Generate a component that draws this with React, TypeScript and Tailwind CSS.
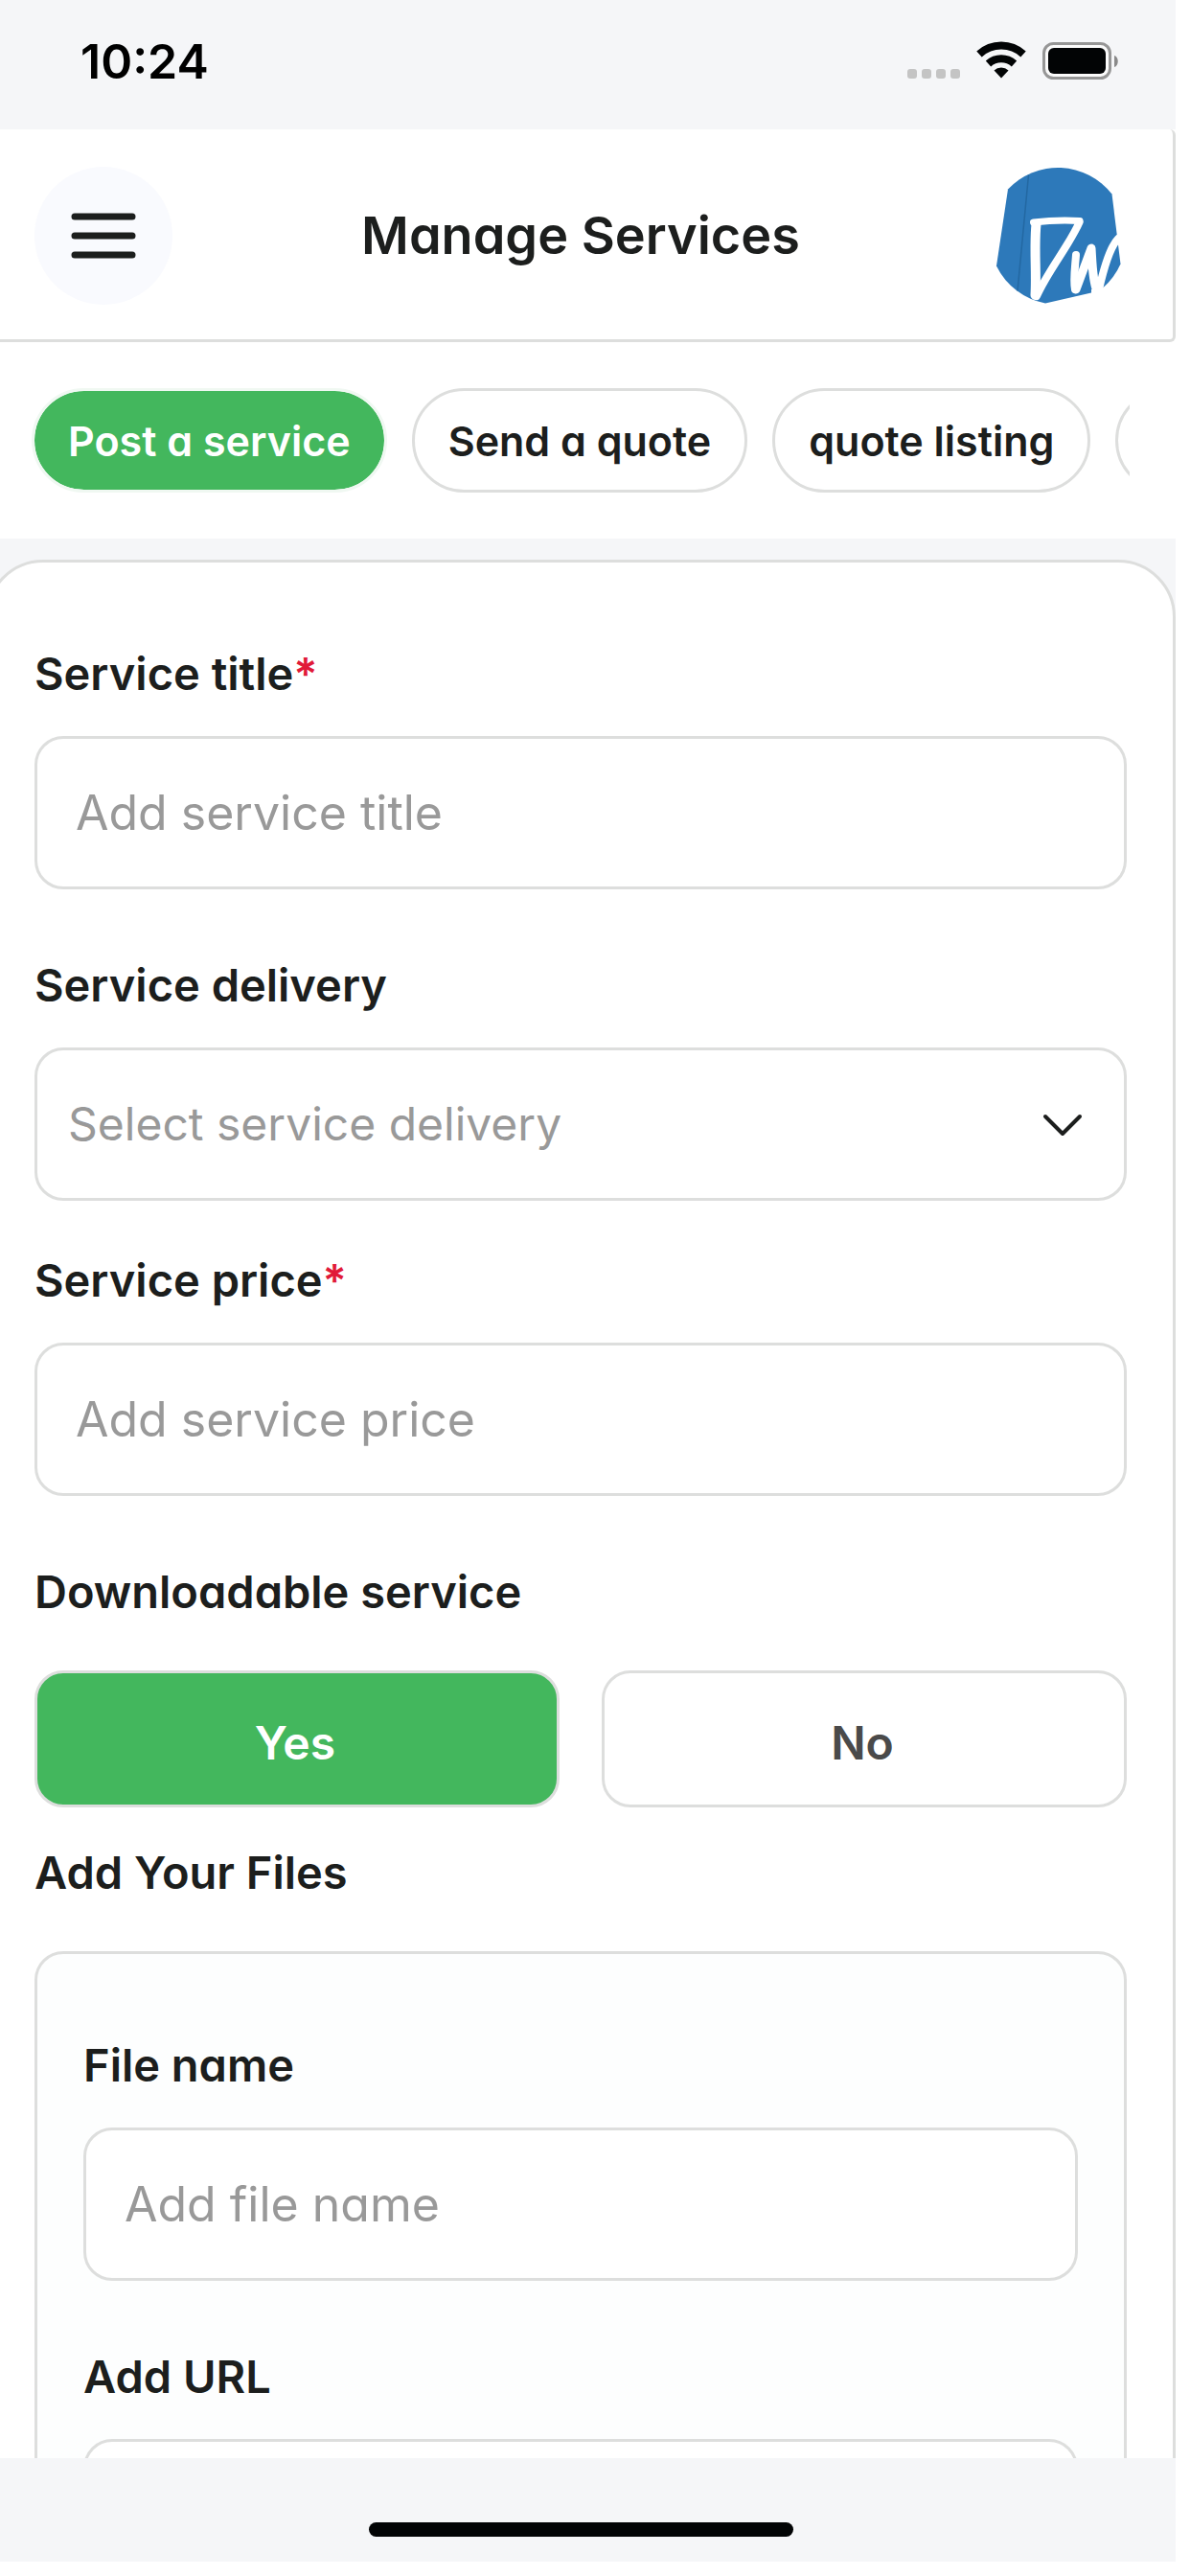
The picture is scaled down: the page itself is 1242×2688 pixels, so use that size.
import { useId, useState } from 'react';
import type { ReactNode } from 'react';

function StatusBar() {
  return (
    <div className="flex h-[135px] shrink-0 items-start justify-between bg-[#f5f6f8] pr-[58px] pl-[84px]">
      <time className="pt-[34px] text-[50px] leading-[60px] font-semibold text-black">10:24</time>
      <svg className="mt-[42px]" width="223" height="42" viewBox="0 0 223 42" aria-hidden="true">
        <g fill="#c4c4c4">
          <rect x="1" y="30" width="10" height="10" rx="3" />
          <rect x="16" y="30" width="10" height="10" rx="3" />
          <rect x="31" y="30" width="10" height="10" rx="3" />
          <rect x="46" y="30" width="10" height="10" rx="3" />
        </g>
        <g fill="none" stroke="#020405" strokeWidth="8">
          <path d="M76 14.500a34 34 0 0 1 46 0" />
          <path d="M85.500 24.500a20 20 0 0 1 27 0" />
        </g>
        <path d="M91.500 31.500a11 11 0 0 1 15 0L99 39.500z" fill="#020405" />
        <rect x="143.500" y="3.500" width="69" height="36" rx="10" fill="#fbfbfb" stroke="#969696" strokeWidth="3" />
        <rect x="148" y="8" width="60" height="27" rx="6" fill="#020405" />
        <path d="M217 16c5 1 5 11 0 12z" fill="#8a8a8a" />
      </svg>
    </div>
  );
}

function Avatar() {
  return (
    <svg className="size-36" viewBox="0 0 144 144" role="img" aria-label="Profile">
      <path
        d="M20 23.500A71.500 71.500 0 0 1 128.500 28.500L137.500 101.500A71.500 71.500 0 0 1 119.500 126L107 131.500L59 142.500A71.500 71.500 0 0 1 8 103.500z"
        fill="#2d79ba"
      />
      <path d="M41.500 8.500L30 129.500" stroke="#2368a2" strokeWidth="1.500" />
      <path d="M107 128h14v7h-14z" fill="#fff" />
      <g fill="none" stroke="#fff" strokeLinecap="round" strokeLinejoin="round">
        <path d="M46.500 58Q72 55 95 56.500" strokeWidth="7" />
        <path d="M49.500 60C47 84 50 110 48.500 134" strokeWidth="10" />
        <path d="M94.500 58C84 82 62 108 50 135" strokeWidth="8" />
        <path d="M91 92C90 106 88 118 90 128" strokeWidth="8" />
        <path d="M91 128L107 85C108 100 108 118 113 130" strokeWidth="9" />
        <path d="M115 128C120 106 126 84 135 75" strokeWidth="8" />
      </g>
    </svg>
  );
}

function Header() {
  return (
    <header className="-ml-[15px] flex shrink-0 items-center justify-between rounded-md border-x-3 border-b-3 border-[#dddedd] bg-white px-12 pt-[39px] pb-9">
      <button type="button" aria-label="Open menu" className="flex size-36 items-center justify-center rounded-full bg-[#f9fafe]">
        <svg width="68" height="48" viewBox="0 0 68 48" fill="none" stroke="#1c1e1d" strokeWidth="7" strokeLinecap="round">
          <path d="M4 4h60M4 24h60M4 44h60" />
        </svg>
      </button>
      <h1 className="text-[54px] leading-[72px] font-semibold">Manage Services</h1>
      <Avatar />
    </header>
  );
}

const tabs = ['Post a service', 'Send a quote', 'quote listing'];

function Tabs() {
  const [active, setActive] = useState(tabs[0]);
  return (
    <nav className="mr-12 ml-[33px] flex shrink-0 gap-[26px] overflow-hidden py-12">
      {tabs.map((tab) => (
        <button
          key={tab}
          type="button"
          aria-pressed={tab === active}
          onClick={() => setActive(tab)}
          className={
            'h-[109px] shrink-0 rounded-full border-3 px-[35px] text-[43px] leading-[56px] font-semibold whitespace-nowrap ' +
            (tab === active ? 'border-[#f0f8f2] bg-[#43b75d] bg-clip-padding text-white' : 'border-[#dddedd] bg-white')
          }
        >
          {tab}
        </button>
      ))}
      <button type="button" aria-label="More" className="h-[109px] w-80 shrink-0 rounded-full border-3 border-[#dddedd] bg-white" />
    </nav>
  );
}

function Field({ label, required, children }: { label: string; required?: boolean; children: (id: string) => ReactNode }) {
  const id = useId();
  return (
    <div className="flex flex-col gap-[35px]">
      <label htmlFor={id} className="text-[47px] leading-[60px] font-semibold">
        {label}
        {required && <span className="text-[#e11a38]">*</span>}
      </label>
      {children(id)}
    </div>
  );
}

function TextField({ label, required, placeholder }: { label: string; required?: boolean; placeholder: string }) {
  return (
    <Field label={label} required={required}>
      {(id) => (
        <input
          id={id}
          type="text"
          placeholder={placeholder}
          className="h-40 w-full rounded-[30px] border-3 border-[#dddedd] bg-white px-10 text-[50px] outline-none placeholder:text-[#999999]"
        />
      )}
    </Field>
  );
}

function DeliveryField() {
  return (
    <Field label="Service delivery">
      {(id) => (
        <div className="relative">
          <select
            id={id}
            defaultValue=""
            className="h-40 w-full appearance-none rounded-[30px] border-3 border-[#dddedd] bg-white px-8 text-[48px] text-[#999999] outline-none [font-feature-settings:normal]"
          >
            <option value="">Select service delivery</option>
          </select>
          <svg
            className="pointer-events-none absolute top-[68px] right-[45px]"
            width="44"
            height="26"
            viewBox="0 0 44 26"
            fill="none"
            stroke="#1c1e1d"
            strokeWidth="4"
            strokeLinecap="round"
            strokeLinejoin="round"
          >
            <path d="M4 4l18 18L40 4" />
          </svg>
        </div>
      )}
    </Field>
  );
}

function DownloadableChoice() {
  const [choice, setChoice] = useState('Yes');
  return (
    <div role="group" aria-labelledby="downloadable" className="flex flex-col gap-[52px]">
      <h2 id="downloadable" className="text-[47px] leading-[60px] font-semibold">
        Downloadable service
      </h2>
      <div className="grid grid-cols-2 gap-11">
        {['Yes', 'No'].map((option) => (
          <button
            key={option}
            type="button"
            aria-pressed={option === choice}
            onClick={() => setChoice(option)}
            className={
              'h-[143px] rounded-[30px] border-3 border-[#dddedd] pt-2 pr-1 text-[48px] leading-[60px] font-semibold ' +
              (option === choice ? 'bg-[#43b75d] text-white' : 'bg-white text-[#4a4a4a]')
            }
          >
            {option}
          </button>
        ))}
      </div>
    </div>
  );
}

export default function App() {
  return (
    <div className="flex h-screen flex-col overflow-hidden bg-white pr-[15px] pb-[15px] font-[Inter,Roboto,sans-serif] text-[#1c1e1d] [font-feature-settings:'cv11']">
      <StatusBar />
      <Header />
      <Tabs />
      <main className="min-h-0 flex-1 overflow-hidden bg-[#f5f6f8] pt-[22px]">
        <form className="-ml-[15px] rounded-t-[60px] border-3 border-[#dddedd] bg-white px-12 py-[86px]">
          <div className="flex flex-col gap-[70px]">
            <TextField label="Service title" required placeholder="Add service title" />
            <DeliveryField />
          </div>
          <div className="mt-[53px] flex flex-col gap-[70px]">
            <TextField label="Service price" required placeholder="Add service price" />
            <DownloadableChoice />
          </div>
          <section className="mt-[38px] flex flex-col gap-[52px]">
            <h2 className="text-[47px] leading-[60px] font-semibold">Add Your Files</h2>
            <div className="flex flex-col gap-[70px] rounded-[30px] border-3 border-[#dddedd] bg-[#fdfefe] px-12 py-[86px]">
              <TextField label="File name" placeholder="Add file name" />
              <TextField label="Add URL" placeholder="Add URL" />
            </div>
          </section>
        </form>
      </main>
      <footer className="flex h-[108px] shrink-0 items-end justify-center bg-[#f5f6f8] pr-[15px] pb-[26px]">
        <div className="h-[15px] w-[443px] rounded-full bg-[#020405]" />
      </footer>
    </div>
  );
}
